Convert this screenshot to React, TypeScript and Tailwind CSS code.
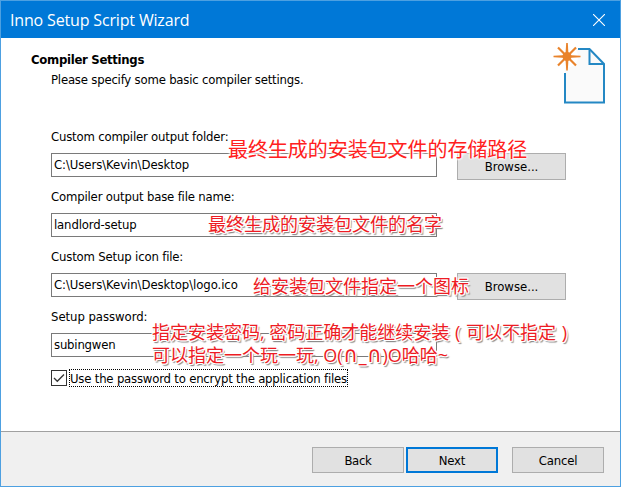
const UI = "font-['DejaVu_Sans_Condensed','DejaVu_Sans',sans-serif] [font-stretch:condensed]";
const NOTE =
  "pointer-events-none absolute whitespace-nowrap [font-stretch:normal] font-['Open_Sans','Noto_Sans_CJK_SC',sans-serif] text-[18px] leading-[23px] text-[#ed1c24] [text-shadow:-1px_-1px_0_#fff,1px_-1px_0_#fff,-1px_1px_0_#fff,1px_1px_0_#fff,0_-1px_0_#fff,0_1px_0_#fff,-1px_0_0_#fff,1px_0_0_#fff,1px_2px_1px_#888,2px_2px_1px_#999]";

function Field({
  label,
  labelClass,
  value,
  valueClass,
  browse,
}: {
  label: string;
  labelClass: string;
  value: string;
  valueClass: string;
  browse?: boolean;
}) {
  return (
    <div className="h-[60px]">
      <div className="flex h-[26px] items-start pt-[2px]">
        <label className={`leading-4 ${labelClass}`}>{label}</label>
      </div>
      <div className="flex items-start gap-5">
        <div className="flex h-6 w-[386px] items-center border border-[#7a7a7a] bg-white pb-px pl-[2px]">
          <span className={valueClass}>{value}</span>
        </div>
        {browse && (
          <button className="h-[27px] w-[109px] border border-[#adadad] bg-[#e1e1e1]">Browse...</button>
        )}
      </div>
    </div>
  );
}

function Cap() {
  return <span className="inline-block w-4 text-center font-['DejaVu_Sans_Condensed'] text-[22px] leading-none [font-stretch:condensed]">∩</span>;
}

function NewDocumentIcon() {
  return (
    <svg className="absolute left-[551px] top-[41px]" width="56" height="64" viewBox="0 0 56 64" fill="none">
      <path d="M13 7H37.5L52 22V60.5H13Z" fill="#fafafa" />
      <path d="M26 7H37.5L52 22V60.5H13V31" stroke="#2488c4" strokeWidth="2" />
      <path d="M37.5 7V22H52" stroke="#2488c4" strokeWidth="2" />
      <circle cx="15" cy="14.5" r="11" fill="#fff" />
      <g fill="#e9832b">
        <path d="M14.2 1H15.8L16.6 14.5L15.8 28.5H14.2L13.4 14.5Z" />
        <path d="M1.5 13.7V15.3L15 16.1L28.5 15.3V13.7L15 12.9Z" />
      </g>
      <path d="M6 5.5L24 23.5M24 5.5L6 23.5" stroke="#e9832b" strokeWidth="2.2" />
      <circle cx="15" cy="14.5" r="4.5" fill="#e9832b" />
    </svg>
  );
}

export default function App() {
  return (
    <div className={`relative flex h-[487px] w-[621px] flex-col overflow-hidden border border-[#4da0e1] bg-white text-[13px] leading-4 text-black ${UI}`}>
      <header className="flex h-[37px] shrink-0 items-center justify-between bg-[#0078d7] pl-[9px] pr-[15px] text-white">
        <span className="font-['Open_Sans',sans-serif] text-[16px] leading-5 tracking-[-0.16px] [font-stretch:normal]">Inno Setup Script Wizard</span>
        <svg width="12" height="12" viewBox="0 0 12 12" stroke="white" strokeWidth="1.1">
          <path d="M0 0L12 12M12 0L0 12" />
        </svg>
      </header>
      <main className="h-[393px] shrink-0 pl-[50px] pt-[14px]">
        <h1 className="-ml-5 font-bold leading-4 tracking-[-0.3px]">Compiler Settings</h1>
        <p className="mt-1 leading-4 tracking-[-0.2px]">Please specify some basic compiler settings.</p>
        <div className="mt-[39px]">
          <Field label="Custom compiler output folder:" labelClass="tracking-[-0.19px]" value="C:\Users\Kevin\Desktop" valueClass="tracking-[-0.07px]" browse />
          <Field label="Compiler output base file name:" labelClass="tracking-[-0.17px]" value="landlord-setup" valueClass="tracking-[-0.15px]" />
          <Field label="Custom Setup icon file:" labelClass="tracking-[-0.17px]" value="C:\Users\Kevin\Desktop\logo.ico" valueClass="tracking-[-0.07px]" browse />
          <Field label="Setup password:" labelClass="tracking-[-0.05px]" value="subingwen" valueClass="tracking-[-0.2px]" />
        </div>
        <div className="mt-[2px] flex items-center gap-[2px]">
          <span className="flex size-4 items-center justify-center border border-[#333] bg-white">
            <svg width="12" height="10" viewBox="0 0 12 10" fill="none" stroke="#333" strokeWidth="1.3">
              <path d="M1 5L4.3 8.3L11 1.5" />
            </svg>
          </span>
          <span className="flex h-[18px] w-[279px] items-center whitespace-nowrap border border-dotted border-black pt-px tracking-[-0.2px]">
            Use the password to encrypt the application files
          </span>
        </div>
      </main>
      <footer className="flex flex-1 border-t border-[#a0a0a0] bg-[#f0f0f0] pl-[311px] pt-[15px]">
        <button className="h-[26px] w-[92px] border border-[#adadad] bg-[#e1e1e1] pt-px tracking-[-0.3px]">Back</button>
        <button className="ml-[2px] h-[26px] w-[92px] border-2 border-[#0078d7] bg-[#e1e1e1] pt-px tracking-[-0.2px]">Next</button>
        <button className="ml-[14px] h-[26px] w-[92px] border border-[#adadad] bg-[#e1e1e1] pt-px tracking-[-0.2px]">Cancel</button>
      </footer>
      <NewDocumentIcon />
      <div className="pointer-events-none absolute left-[227px] top-[136px] whitespace-nowrap font-['Noto_Sans_CJK_SC',sans-serif] text-[20px] leading-6 tracking-[-0.05px] text-[#ff2020] [text-shadow:0_0_2px_#fff,0_0_2px_#fff,0_0_3px_#fff,0_0_3px_#fff,0_0_3px_#fff]">
        最终生成的安装包文件的存储路径
      </div>
      <div className={`${NOTE} left-[207px] top-[212px]`}>最终生成的安装包文件的名字</div>
      <div className={`${NOTE} left-[252px] top-[274px]`}>给安装包文件指定一个图标</div>
      <div className={`${NOTE} left-[151px] top-[320px]`}>
        指定安装密码, 密码正确才能继续安装 <span className="px-px">(</span> 可以不指定 <span className="px-px">)</span>
        <br />
        可以指定一个玩一玩, O(<Cap />_<Cap />)O哈哈~
      </div>
    </div>
  );
}
